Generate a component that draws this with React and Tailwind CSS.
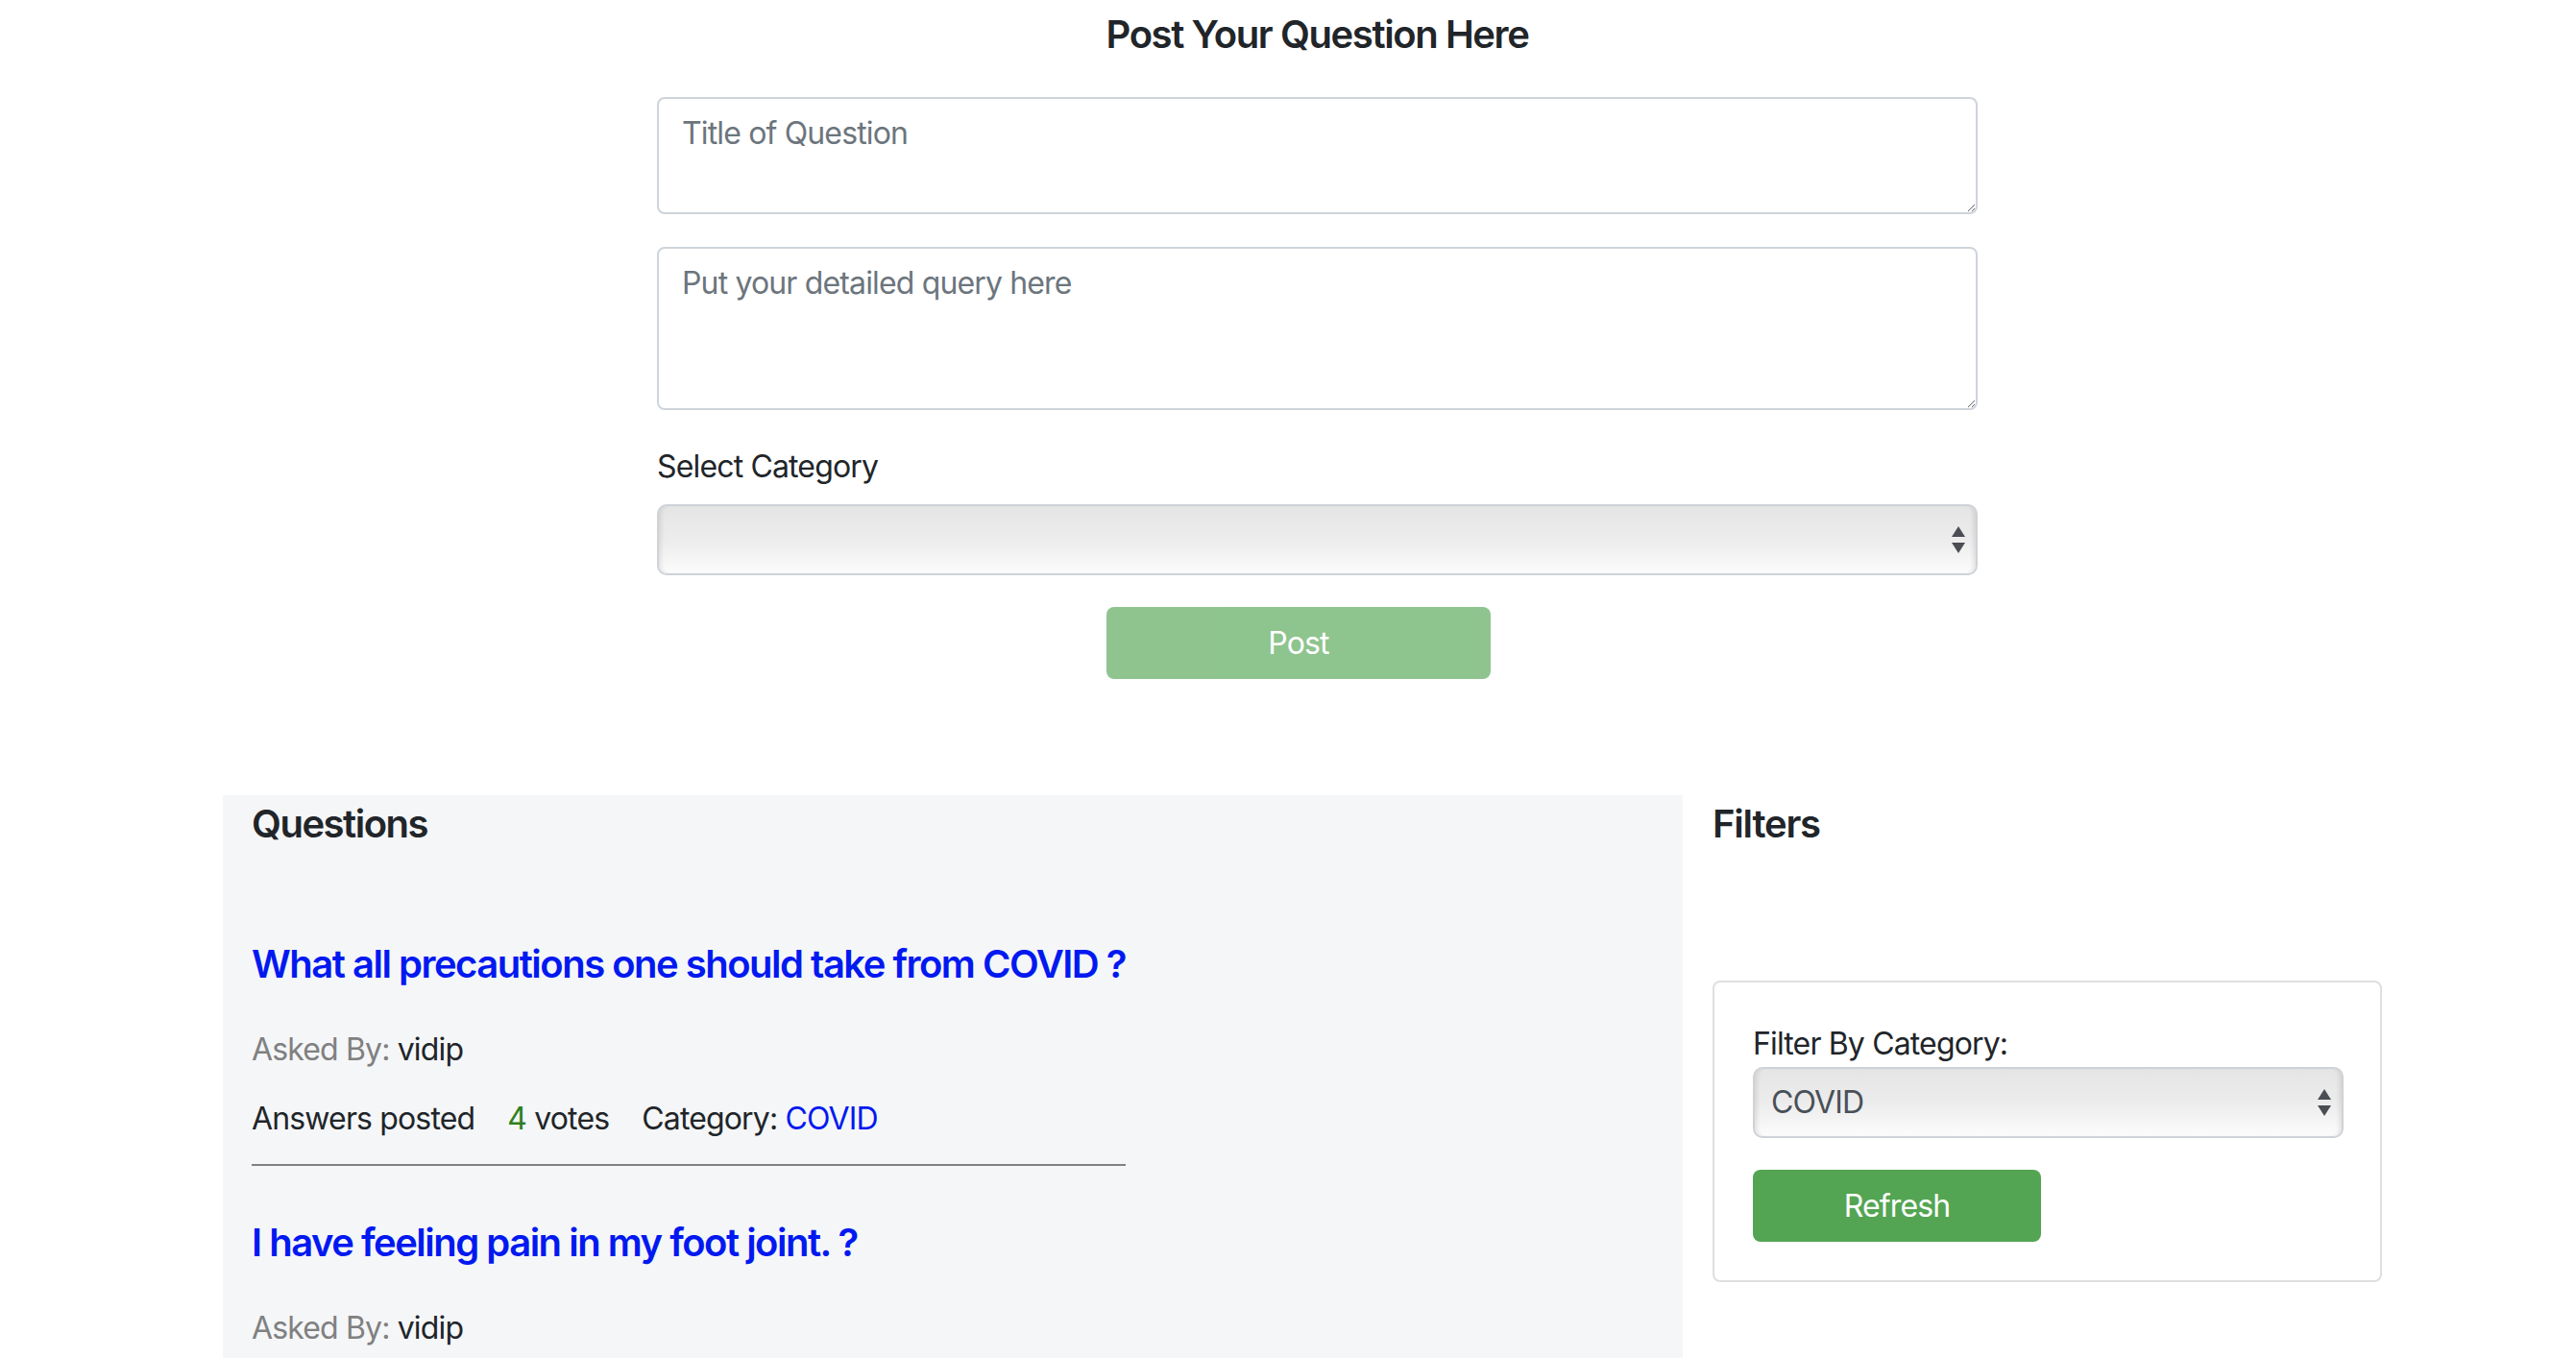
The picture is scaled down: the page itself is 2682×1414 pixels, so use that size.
import React from "react";

function Arrows() {
  return (
    <svg width="14" height="28" viewBox="0 0 14 28" className="shrink-0">
      <path d="M7 0 L14 11 L0 11 Z" fill="#4a4d52" />
      <path d="M0 17 L14 17 L7 28 Z" fill="#4a4d52" />
    </svg>
  );
}

function FakeSelect({ value, className }) {
  return (
    <div
      className={
        "flex items-center justify-between h-[74px] rounded-[10px] border-2 border-[#cfd3d8] bg-gradient-to-b from-[#e5e5e5] via-[#ececec] to-[#fcfcfc] shadow-[inset_5px_0_5px_-3px_rgba(0,0,0,0.10),inset_-5px_0_5px_-3px_rgba(0,0,0,0.10)] pl-[17px] pr-[11px] " +
        (className || "")
      }
    >
      <span className="text-[32px] leading-[48px] text-[#495057]">{value}</span>
      <Arrows />
    </div>
  );
}

function Question({ title }) {
  return (
    <div className="w-fit">
      <div className="text-[40px] leading-[48px] font-semibold text-[#0019f0] tracking-[-1.5px]">{title}</div>
      <div className="mt-[41px] text-[32px] leading-[48px]">
        <span className="text-[#808080]">Asked By: </span>
        <span className="text-[#212529]">vidip</span>
      </div>
      <div className="mt-[24px] text-[32px] leading-[48px] text-[#212529] flex">
        <span className="mr-[34px]">Answers posted</span>
        <span className="mr-[34px]">
          <span className="text-[#2f7f1f]">4</span> votes
        </span>
        <span>
          Category: <span className="text-[#0019f0]">COVID</span>
        </span>
      </div>
      <div className="mt-[23px] h-[2px] bg-[#808080]" />
    </div>
  );
}

export default function App() {
  return (
    <div
      className="w-full min-h-[1414px] bg-white text-[#212529] tracking-[-0.85px]"
      style={{ fontFamily: "Inter, 'Noto Sans', sans-serif" }}
    >
      {/* Post form */}
      <div className="ml-[684px] w-[1375px] pt-[12px]">
        <h5 className="text-center text-[40px] leading-[48px] font-semibold tracking-[-1.4px]">
          Post Your Question Here
        </h5>
        <textarea
          placeholder="Title of Question"
          className="mt-[41px] block w-full h-[122px] border-2 border-[#ced4da] rounded-[8px] px-[24px] py-[12px] text-[32px] leading-[48px] tracking-[-0.85px] placeholder:text-[#6c757d] outline-none"
        />
        <textarea
          placeholder="Put your detailed query here"
          className="mt-[34px] block w-full h-[170px] border-2 border-[#ced4da] rounded-[8px] px-[24px] py-[12px] text-[32px] leading-[48px] tracking-[-0.85px] placeholder:text-[#6c757d] outline-none"
        />
        <div className="mt-[35px] text-[32px] leading-[48px]">Select Category</div>
        <FakeSelect value="" className="mt-[15px] w-full" />
        <div className="mt-[33px] ml-[468px] w-[400px] h-[75px] rounded-[8px] bg-[#53a553] opacity-65 flex items-center justify-center text-white text-[32px]">
          Post
        </div>
      </div>

      {/* Lower section */}
      <div className="mt-[121px] ml-[232px] flex items-start">
        <div className="w-[1520px] min-h-[700px] bg-[#f5f6f8] pl-[30px] pt-[6px]">
          <h4 className="text-[40px] leading-[48px] font-semibold tracking-[-1.5px]">Questions</h4>
          <div className="mt-[98px]">
            <Question title="What all precautions one should take from COVID ?" />
          </div>
          <div className="mt-[56px]">
            <Question title="I have feeling pain in my foot joint. ?" />
          </div>
        </div>
        <div className="pl-[31px] pt-[6px] w-[728px]">
          <h4 className="text-[40px] leading-[48px] font-semibold tracking-[-1.2px]">Filters</h4>
          <div className="mt-[139px] border-2 border-[#dfdfdf] rounded-[8px] p-[40px]">
            <div className="text-[32px] leading-[48px]">Filter By Category:</div>
            <FakeSelect value="COVID" className="w-[615px]" />
            <div className="mt-[33px] w-[300px] h-[75px] rounded-[8px] bg-[#53a553] flex items-center justify-center text-white text-[32px]">
              Refresh
            </div>
          </div>
        </div>
      </div>
    </div>
  );
}
